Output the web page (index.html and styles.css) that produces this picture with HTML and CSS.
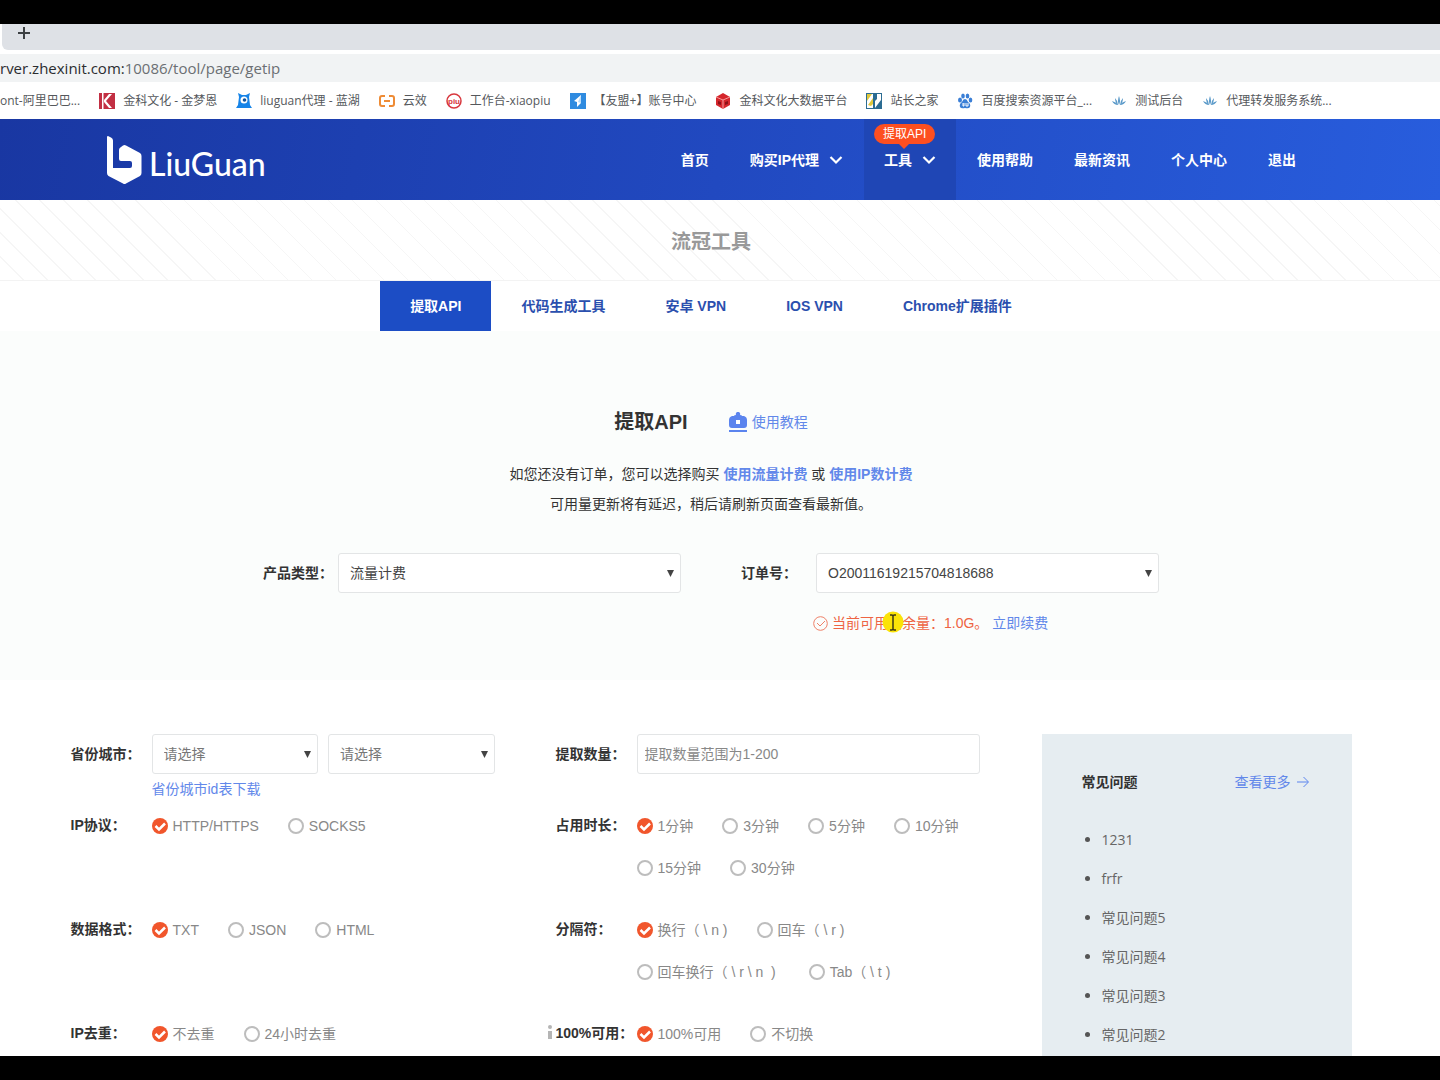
FILE: index.html
```html
<!DOCTYPE html>
<html lang="zh-CN">
<head>
<meta charset="utf-8">
<meta name="viewport" content="width=device-width, initial-scale=1">
<title>流冠工具 - 提取API</title>
<link rel="stylesheet" href="styles.css">
</head>
<body>
<div class="screen">
  <div class="browser">
    <div class="tabstrip">
      <button class="new-tab" aria-label="新标签页"><svg width="12" height="12" viewBox="0 0 12 12"><path d="M6 0v12M0 6h12" stroke="#3c4043" stroke-width="2"/></svg></button>
    </div>
    <div class="address"><span class="host">rver.zhexinit.com:</span>10086/tool/page/getip</div>
    <nav class="bookmarks" aria-label="书签">
      <a href="#">ont-阿里巴巴...</a>
      <a href="#"><svg width="16" height="16" viewBox="0 0 16 16"><path d="M0 0h3v16H0zM4 0h12v16H4z" fill="#c22f43"/><path d="M3 0h1.500v16H3zM13 1L7 8l6 7h-3L5 9V7l5-6z" fill="#fff"/></svg>金科文化 - 金梦恩</a>
      <a href="#"><svg width="16" height="16" viewBox="0 0 16 16"><path d="M3 4L2 0l4 2h4l4-2-1 4 1 8 2 3H0l2-3z" fill="#1684e8"/><circle cx="8" cy="7" r="3.500" fill="#fff"/><circle cx="8.500" cy="7" r="1.800" fill="#14549b"/></svg>liuguan代理 - 蓝湖</a>
      <a href="#"><svg width="16" height="16" viewBox="0 0 16 16"><path d="M6 3H3Q1 3 1 5v6q0 2 2 2h3M10 3h3q2 0 2 2v6q0 2-2 2h-3M5 8h6" fill="none" stroke="#ee8b35" stroke-width="2"/></svg>云效</a>
      <a href="#"><svg width="16" height="16" viewBox="0 0 16 16"><circle cx="8" cy="8" r="7" fill="none" stroke="#d8383e" stroke-width="1.500"/><text x="8" y="11" class="piu" text-anchor="middle">piu</text></svg>工作台-xiaopiu</a>
      <a href="#"><svg width="16" height="16" viewBox="0 0 16 16"><path d="M0 0h16v16H0z" fill="#2f8be0"/><path d="M11 2L4 8l3 1v5l4-4z" fill="#fff"/><path d="M8 9l3-7v8z" fill="#b9dcfa"/></svg>【友盟+】账号中心</a>
      <a href="#"><svg width="16" height="16" viewBox="0 0 16 16"><path d="M8 0l7 4v8l-7 4-7-4V4z" fill="#d5262c"/><path d="M1 4l7 3 7-3M8 7v9" fill="none" stroke="#f59c9c"/><path d="M3 8l3 1v3l-3-1zM10 9l3-1v3l-3 1z" fill="#8c1218"/></svg>金科文化大数据平台</a>
      <a href="#"><svg width="16" height="16" viewBox="0 0 16 16"><path d="M0 0h16v16H0z" fill="#2c6c92"/><path d="M1 1h6v14H1zM9 1h6v14H9z" fill="#fff"/><path d="M1 1h5L1 8zM2 12l5-7v6l-2 2z" fill="#e0c83c"/><path d="M9 1h2v5L9 8zM15 7v8h-6z" fill="#2c6c92"/></svg>站长之家</a>
      <a href="#"><svg width="16" height="16" viewBox="0 0 16 16" fill="#3b7fd6"><ellipse cx="3" cy="7" rx="2" ry="2.500"/><ellipse cx="6" cy="3" rx="1.800" ry="2.500"/><ellipse cx="10.500" cy="3" rx="1.800" ry="2.500"/><ellipse cx="13.500" cy="7" rx="1.800" ry="2.500"/><path d="M8 6q2 0 3 3 3 2 2 5-1 2-5 1-4 1-5-1-1-3 2-5 1-3 3-3z"/><path d="M6 10v3h1v-3M9 10v3h2v-3" fill="none" stroke="#fff"/></svg>百度搜索资源平台_...</a>
      <a href="#"><svg width="16" height="16" viewBox="0 0 16 16" fill="#5b9ac9"><path d="M8 12Q6 8 8 3q2 5 0 9zM7 12Q4 10 4 5q3 3 3 7zM9 12q3-2 3-7-3 3-3 7zM7 12Q3 12 1 8q4 1 6 4zM9 12q4 0 6-4-4 1-6 4z"/></svg>测试后台</a>
      <a href="#"><svg width="16" height="16" viewBox="0 0 16 16" fill="#5b9ac9"><path d="M8 12Q6 8 8 3q2 5 0 9zM7 12Q4 10 4 5q3 3 3 7zM9 12q3-2 3-7-3 3-3 7zM7 12Q3 12 1 8q4 1 6 4zM9 12q4 0 6-4-4 1-6 4z"/></svg>代理转发服务系统...</a>
    </nav>
  </div>

  <header class="site-header">
    <div class="header-inner">
      <a class="logo" href="#"><svg width="36" height="50" viewBox="0 0 36 50"><path d="M1 2q0-1 1-1l3 1.500q2 1 2 3V33h17q2 0 2-2v-3q0-2-2-2H15q-2 0-2-2v-9q0-2 2-3l2-1.500q1.500-1 3 0L34 18q1.500 1 1.500 3v17q0 2-1.500 3l-14 7.500q-1.500 1-3 0L2.500 41Q1 40 1 38z" fill="#fff"/></svg><span>LiuGuan</span></a>
      <nav class="main-nav">
        <a href="#">首页</a>
        <a href="#">购买IP代理<svg width="14" height="10" viewBox="0 0 14 10"><path d="M1.500 2L7 7.500 12.500 2" fill="none" stroke="#fff" stroke-width="2.200"/></svg></a>
        <a class="active" href="#">工具<svg width="14" height="10" viewBox="0 0 14 10"><path d="M1.500 2L7 7.500 12.500 2" fill="none" stroke="#fff" stroke-width="2.200"/></svg><span class="badge">提取API</span></a>
        <a href="#">使用帮助</a>
        <a href="#">最新资讯</a>
        <a href="#">个人中心</a>
        <a href="#">退出</a>
      </nav>
    </div>
  </header>

  <div class="banner"><h1>流冠工具</h1></div>
  <nav class="tool-tabs">
    <a class="active" href="#">提取API</a>
    <a href="#">代码生成工具</a>
    <a href="#">安卓 VPN</a>
    <a href="#">IOS VPN</a>
    <a href="#">Chrome扩展插件</a>
  </nav>

  <section class="order">
    <div class="order-title">
      <h2>提取API</h2>
      <a href="#"><svg width="18" height="20" viewBox="0 0 18 20"><path d="M5 4q0-1 2-1a2.200 2.200 0 1 1 4 0q2 0 2 1h2q3 1 3 4v5q0 3-3 3H3q-3 0-3-3V8q0-3 3-4z" fill="#5b84ee"/><path d="M7 8h4v4H7z" fill="#fff"/><path d="M0 19h18" stroke="#5b84ee" stroke-width="2"/></svg>使用教程</a>
    </div>
    <p>如您还没有订单，您可以选择购买 <a href="#">使用流量计费</a> 或 <a href="#">使用IP数计费</a></p>
    <p>可用量更新将有延迟，稍后请刷新页面查看最新值。</p>
    <div class="order-form">
      <div class="order-field">
        <label for="product">产品类型：</label>
        <select id="product"><option>流量计费</option></select>
      </div>
      <div class="order-field">
        <label for="order-no">订单号：</label>
        <select id="order-no"><option>O20011619215704818688</option></select>
        <div class="hint">
          <svg width="15" height="15" viewBox="0 0 15 15"><circle cx="7.500" cy="7.500" r="6.800" fill="none" stroke="#ee8068"/><path d="M4 7l3 3 5-5" fill="none" stroke="#ee8068"/></svg>
          <span class="quota">当前可用剩余量：1.0G。</span>
          <a href="#">立即续费</a>
          <svg class="pointer" width="22" height="22" viewBox="0 0 22 22"><circle cx="11" cy="11" r="10.500" fill="#fbe308"/><path d="M8 4h2l1 1 1-1h2M11 5v13M8 19h2l1-1 1 1h2" fill="none" stroke="#3d3a16" stroke-width="1.500"/></svg>
        </div>
      </div>
    </div>
  </section>

  <main class="content">
    <form class="options">
      <div class="row">
        <label class="name" for="province">省份城市：</label>
        <div class="field">
          <div class="pair">
            <select id="province"><option>请选择</option></select>
            <select aria-label="城市"><option>请选择</option></select>
          </div>
          <a href="#">省份城市id表下载</a>
        </div>
      </div>
      <div class="row">
        <label class="name" for="amount">提取数量：</label>
        <div class="field"><input id="amount" type="text" placeholder="提取数量范围为1-200"></div>
      </div>
      <div class="row" role="radiogroup" aria-label="IP协议">
        <span class="name">IP协议：</span>
        <div class="radios">
          <label><input type="radio" name="protocol" checked>HTTP/HTTPS</label>
          <label><input type="radio" name="protocol">SOCKS5</label>
        </div>
      </div>
      <div class="row" role="radiogroup" aria-label="占用时长">
        <span class="name">占用时长：</span>
        <div class="radios">
          <label><input type="radio" name="duration" checked>1分钟</label>
          <label><input type="radio" name="duration">3分钟</label>
          <label><input type="radio" name="duration">5分钟</label>
          <label><input type="radio" name="duration">10分钟</label>
          <label><input type="radio" name="duration">15分钟</label>
          <label><input type="radio" name="duration">30分钟</label>
        </div>
      </div>
      <div class="row" role="radiogroup" aria-label="数据格式">
        <span class="name">数据格式：</span>
        <div class="radios">
          <label><input type="radio" name="format" checked>TXT</label>
          <label><input type="radio" name="format">JSON</label>
          <label><input type="radio" name="format">HTML</label>
        </div>
      </div>
      <div class="row" role="radiogroup" aria-label="分隔符">
        <span class="name">分隔符：</span>
        <div class="radios">
          <label><input type="radio" name="separator" checked>换行（ \ n )</label>
          <label><input type="radio" name="separator">回车（ \ r )</label>
          <label><input type="radio" name="separator">回车换行（ \ r \ n&nbsp; )&nbsp;</label>
          <label><input type="radio" name="separator">Tab（ \ t )</label>
        </div>
      </div>
      <div class="row" role="radiogroup" aria-label="IP去重">
        <span class="name">IP去重：</span>
        <div class="radios">
          <label><input type="radio" name="dedupe" checked>不去重</label>
          <label><input type="radio" name="dedupe">24小时去重</label>
        </div>
      </div>
      <div class="row" role="radiogroup" aria-label="100%可用">
        <span class="name"><svg class="info" width="4" height="14" viewBox="0 0 4 14" fill="#b5b5b5"><circle cx="2" cy="2" r="2"/><path d="M0 6h4v8H0z"/></svg>100%可用：</span>
        <div class="radios">
          <label><input type="radio" name="usable" checked>100%可用</label>
          <label><input type="radio" name="usable">不切换</label>
        </div>
      </div>
    </form>
    <aside class="faq">
      <div class="faq-head">
        <h3>常见问题</h3>
        <a href="#">查看更多<svg width="12" height="12" viewBox="0 0 12 12"><path d="M0 6h11M6.500 1L11.500 6l-5 5" fill="none" stroke="#5b84ee"/></svg></a>
      </div>
      <ul>
        <li>1231</li>
        <li>frfr</li>
        <li>常见问题5</li>
        <li>常见问题4</li>
        <li>常见问题3</li>
        <li>常见问题2</li>
      </ul>
    </aside>
  </main>
</div>
</body>
</html>
```
FILE: styles.css
```css
* { box-sizing: border-box; }

body {
  margin: 0;
  height: 100vh;
  padding: 24px 0;
  background: #000;
  color: #333;
  font: 14px/20px "Liberation Sans", "Noto Sans CJK SC", sans-serif;
}

h1, h2, h3, p, ul { margin: 0; padding: 0; }
a { color: #6288ea; text-decoration: none; }
svg { display: block; flex: none; }

.screen {
  height: 100%;
  overflow: hidden;
  background: #fff;
}

/* browser chrome */
.tabstrip {
  display: flex;
  height: 26px;
  margin-left: 2px;
  padding: 3px 16px;
  background: #dee1e6;
  border-radius: 0 0 0 6px;
}
.new-tab {
  display: flex;
  width: 12px;
  height: 12px;
  padding: 0;
  border: 0;
  background: none;
}
.address {
  height: 28px;
  margin-top: 4px;
  background: #f1f3f4;
  color: #6b6f73;
  font: 15px/28px "Open Sans", sans-serif;
  white-space: nowrap;
}
.host { color: #2b2d30; }
.bookmarks {
  display: flex;
  gap: 19px;
  height: 37px;
  align-items: center;
  white-space: nowrap;
  font: 12px/20px "Open Sans", "Noto Sans CJK SC", sans-serif;
}
.bookmarks a {
  display: flex;
  align-items: center;
  gap: 8px;
  color: #55585c;
}
.piu {
  font: bold 8px "Liberation Sans", sans-serif;
  fill: #d8383e;
}

/* site header */
.site-header {
  padding-right: 18px;
  background: linear-gradient(100deg, #1937a2, #2149c0 50%, #285ddd);
}
.header-inner {
  display: flex;
  justify-content: space-between;
  max-width: 1210px;
  height: 81px;
  margin: 0 auto;
}
.logo {
  display: flex;
  align-items: center;
  gap: 7px;
  color: #fff;
}
.logo span {
  padding-top: 8px;
  font: 500 32px/40px Lato, sans-serif;
}
.main-nav {
  display: flex;
  gap: 1px;
}
.main-nav a {
  position: relative;
  display: flex;
  align-items: center;
  gap: 10px;
  padding: 0 20px;
  color: #fff;
  font-weight: bold;
}
.main-nav .active { background: #1f46b5; }
.badge {
  position: absolute;
  top: 5px;
  left: 10px;
  padding: 0 9px;
  border-radius: 10px;
  background: #fd4f20;
  font-size: 12px;
  font-weight: normal;
  white-space: nowrap;
}
.badge::after {
  content: "";
  position: absolute;
  top: 20px;
  left: 25px;
  border: 5px solid transparent;
  border-top-color: #fd4f20;
  border-bottom: 0;
}

.banner {
  padding: 28px 18px 24px 0;
  border-bottom: 1px solid #f3f3f3;
  background: repeating-linear-gradient(45deg, #fff 0 16px, #f6f6f6 16px 17px);
  text-align: center;
}
.banner h1 {
  color: #999;
  font-size: 20px;
  line-height: 28px;
}

.tool-tabs {
  display: flex;
  justify-content: center;
  padding-right: 18px;
}
.tool-tabs a {
  padding: 0 30px;
  color: #2b4fae;
  font-weight: bold;
  line-height: 50px;
}
.tool-tabs .active {
  background: #1c4dc5;
  color: #fff;
}

/* order picker */
.order {
  padding: 76px 18px 37px 0;
  background: #fbfdfc;
  text-align: center;
}
.order-title {
  display: flex;
  justify-content: center;
  align-items: center;
  gap: 41px;
  margin-bottom: 22px;
}
.order-title h2 {
  font-size: 20px;
  line-height: 30px;
}
.order-title a {
  display: flex;
  align-items: center;
  gap: 5px;
}
.order p { line-height: 30px; }
.order p a { font-weight: bold; }
.order-form {
  display: flex;
  justify-content: center;
  gap: 60px;
  margin-top: 34px;
  text-align: left;
}
.order-field {
  display: grid;
  grid-template-columns: 75px 343px;
  align-content: start;
}
.order-field label {
  font-weight: bold;
  line-height: 40px;
}
.hint {
  position: relative;
  grid-column: 2;
  display: flex;
  align-items: center;
  gap: 4px;
  height: 40px;
  margin: 10px 0 0 -3px;
}
.quota { color: #ee6443; }
.pointer {
  position: absolute;
  top: 8px;
  left: 69px;
}

select, input[type="text"] {
  width: 100%;
  height: 40px;
  border: 1px solid #e3e5e6;
  border-radius: 3px;
  background: #fff;
  color: #444;
  font: inherit;
}
select {
  appearance: none;
  padding: 0 11px;
  background: #fff url("data:image/svg+xml,%3Csvg xmlns='http://www.w3.org/2000/svg' width='7' height='7'%3E%3Cpath d='M0 0h7L3.500 7z' fill='%23444'/%3E%3C/svg%3E") no-repeat right 6px center;
}
input[type="text"] { padding: 0 7px; }
input::placeholder { color: #888; }

/* extraction options */
.content {
  display: flex;
  justify-content: center;
  gap: 62px;
  padding: 54px 18px 0 0;
}
.options {
  display: grid;
  grid-template-columns: 424px 424px;
  grid-template-rows: 71px;
  align-content: start;
  column-gap: 61px;
}
.row {
  display: grid;
  grid-template-columns: 81px 1fr;
  align-items: start;
}
.row:nth-child(n+5) { margin-top: 20px; }
.name {
  position: relative;
  font-weight: bold;
  line-height: 40px;
}
.info {
  position: absolute;
  top: 12px;
  left: -8px;
}
.pair {
  display: grid;
  grid-template-columns: 1fr 1fr;
  gap: 10px;
  margin-bottom: 5px;
}
.pair select { color: #777; }
.radios {
  display: flex;
  flex-wrap: wrap;
  column-gap: 29px;
  min-height: 84px;
  align-content: flex-start;
  color: #888;
}
.radios label {
  display: flex;
  align-items: center;
  gap: 5px;
  height: 42px;
}
.radios input {
  appearance: none;
  width: 16px;
  height: 16px;
  margin: 0;
  border: 2px solid #bdbdbd;
  border-radius: 50%;
}
.radios input:checked {
  border: 0;
  background: #f1562c url("data:image/svg+xml,%3Csvg xmlns='http://www.w3.org/2000/svg' width='16' height='16'%3E%3Cpath d='M3.500 8l3.500 3.500 6-6' fill='none' stroke='%23fff' stroke-width='2.500'/%3E%3C/svg%3E");
}

.faq {
  width: 310px;
  padding: 38px 40px;
  background: #e6edf1;
}
.faq-head {
  display: flex;
  justify-content: space-between;
  margin-bottom: 28px;
  padding-right: 3px;
}
.faq-head h3 { font-size: 14px; line-height: 20px; }
.faq-head a {
  display: flex;
  align-items: center;
  gap: 6px;
}
.faq ul {
  padding-left: 20px;
  color: #666;
  font-family: "Open Sans", "Noto Sans CJK SC", sans-serif;
  line-height: 39px;
}
.faq li::marker { color: #555; }
```
